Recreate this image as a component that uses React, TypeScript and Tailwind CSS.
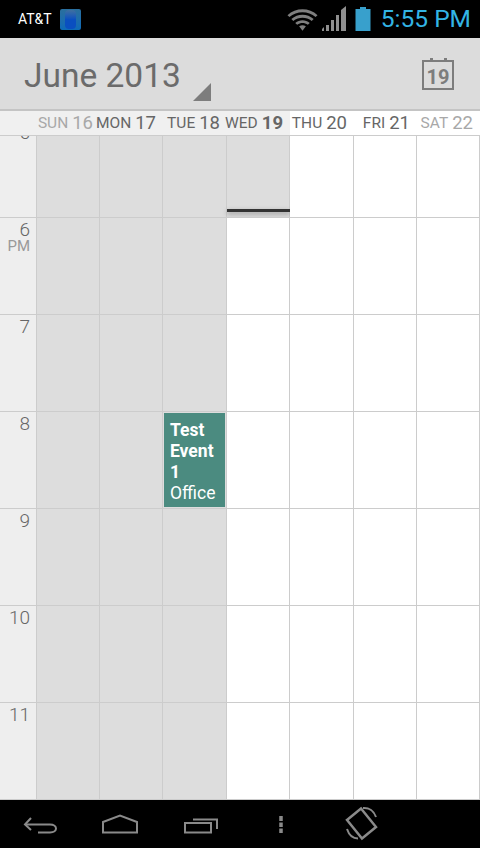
const days = [
  { name: 'SUN', num: '16', color: 'text-[#a8a8a8]', w: 'w-[63px]' },
  { name: 'MON', num: '17', color: 'text-[#666666]', w: 'w-[63px]' },
  { name: 'TUE', num: '18', color: 'text-[#666666]', w: 'w-[64px]' },
  { name: 'WED', num: '19', color: 'text-[#666666]', w: 'w-[63px]', today: true },
  { name: 'THU', num: '20', color: 'text-[#666666]', w: 'w-[64px]' },
  { name: 'FRI', num: '21', color: 'text-[#666666]', w: 'w-[63px]' },
  { name: 'SAT', num: '22', color: 'text-[#a8a8a8]', w: 'w-[63px]' },
];

const hours = ['6', '7', '8', '9', '10', '11'];

function StatusBar() {
  return (
    <div className="h-[38px] bg-black flex items-center pl-[18px] pr-[9px] shrink-0">
      <span className="text-[14px] text-white">AT&amp;T</span>
      <div className="ml-[8px] w-[21px] h-[21px] rounded-[2px] bg-gradient-to-b from-[#2a6f9e] to-[#0c6ab8] flex items-center justify-center">
        <div className="w-[11px] h-[19px] rounded-[4px] bg-gradient-to-b from-[#3f6f9f] via-[#0a4fc0] to-[#0a4fc0]" />
      </div>
      <svg className="ml-auto" width="31" height="24" viewBox="0 0 32 24" fill="#7f7f7f">
        <path d="M0.500 8C9 0 23 0 31.500 8L29.500 10C22 3.500 10 3.500 2.500 10Z" />
        <path d="M4.500 12C11 6 21 6 27.500 12L25.500 14C20 9.500 12 9.500 6.500 14Z" />
        <path d="M8.500 16C13 12.500 19 12.500 23.500 16L21.500 18C18 15.500 14 15.500 10.500 18Z" />
        <path d="M12.500 19.500C15 18 17 18 19.500 19.500L16 24Z" />
      </svg>
      <svg className="ml-[3px]" width="26" height="26" viewBox="0 0 26 26" fill="#8f8f8f">
        <path d="M1 25V23L3 21V25Z" />
        <path d="M5 25V19H8V25Z" />
        <path d="M10 25V14H13V25Z" />
        <path d="M15 25V9H18V25Z" />
        <path d="M20 25V4L25 0V25Z" />
      </svg>
      <svg className="ml-[8px]" width="16" height="24" viewBox="0 0 16 24" fill="#38a0cc">
        <path d="M5 0H11V2H15.500V24H0.500V2H5Z" />
      </svg>
      <span className="ml-[10px] text-[24.500px] leading-none text-[#33b5e5]">5:55 PM</span>
    </div>
  );
}

function ActionBar() {
  return (
    <div className="h-[71px] bg-[#dcdcdc] flex items-start relative shrink-0">
      <span className="ml-[24px] mt-[18px] text-[33.500px] leading-[40px] text-[#6b6b6b]">June 2013</span>
      <svg className="absolute left-[193px] top-[45px]" width="18" height="18" viewBox="0 0 18 18" fill="#7d7d7d">
        <path d="M18 0V18H0Z" />
      </svg>
      <div className="absolute left-[422px] top-[22px] w-[32px] h-[30px] border-2 border-[#7d7d7d] flex items-center justify-center">
        <span className="text-[20px] leading-none font-bold text-[#7d7d7d] mt-[3px]">19</span>
      </div>
      <div className="absolute left-[430px] top-[20px] w-[3px] h-[4px] bg-[#7d7d7d]" />
      <div className="absolute left-[444px] top-[20px] w-[3px] h-[4px] bg-[#7d7d7d]" />
    </div>
  );
}

function DayHeader() {
  return (
    <div className="h-[27px] flex shrink-0 border-t-2 border-[#c4c4c4] border-b border-b-[#cccccc]">
      <div className="w-[37px] bg-[#f0f0f0]" />
      {days.map((d, i) => (
        <div
          key={d.name}
          className={`${d.w} flex items-center justify-end gap-[4px] pr-[7px] pt-[1px] whitespace-nowrap ${d.color} ${i < 4 ? 'bg-[#f0f0f0]' : 'bg-white'}`}
        >
          <span className="text-[15.500px] leading-none">{d.name}</span>
          <span className={`text-[18.500px] leading-none ${d.today ? 'font-bold' : ''}`}>{d.num}</span>
        </div>
      ))}
    </div>
  );
}

function DayCell({ index, shaded, children }: { index: number; shaded: boolean; children?: React.ReactNode }) {
  return (
    <div className={`${days[index].w} relative border-r border-[#cccccc] ${shaded ? 'bg-[#dddddd]' : 'bg-white'}`}>
      {children}
    </div>
  );
}

function HourRow({ hour }: { hour: string }) {
  return (
    <div className="h-[97px] flex border-b border-[#cccccc]">
      <div className="w-[37px] bg-[#eeeeee] border-r border-[#cccccc] relative text-right pr-[6px] pt-[2px]">
        <div className="text-[19px] leading-[20px] font-light text-[#666666]">{hour}</div>
        {hour === '6' && <div className="text-[15px] leading-[14px] -mt-[1px] text-[#999999]">PM</div>}
      </div>
      {days.map((d, i) => (
        <DayCell key={d.name} index={i} shaded={i < 3}>
          {hour === '8' && i === 2 && (
            <div className="absolute left-[1px] top-[1px] w-[61px] h-[94px] bg-[#4b8b80] text-white px-[6px] pt-[7px] text-[17.500px] leading-[21px]">
              <div className="font-bold">Test Event 1</div>
              <div>Office</div>
            </div>
          )}
        </DayCell>
      ))}
    </div>
  );
}

function FirstRow() {
  return (
    <div className="h-[82px] flex border-b border-[#cccccc] overflow-hidden">
      <div className="w-[37px] bg-[#eeeeee] border-r border-[#cccccc] text-right pr-[6px] overflow-hidden">
        <div className="text-[19px] leading-[22px] font-light text-[#666666] -mt-[14px]">5</div>
      </div>
      {days.map((d, i) => (
        <DayCell key={d.name} index={i} shaded={i < 4}>
          {i === 3 && (
            <div className="absolute left-0 right-[-1px] top-[73px] h-[3px] bg-[#333333] shadow-[0_2px_5px_rgba(0,0,0,0.35)]" />
          )}
        </DayCell>
      ))}
    </div>
  );
}

function NavBar() {
  return (
    <div className="h-[48px] bg-black flex items-center shrink-0 relative">
      <svg className="absolute left-0 top-0" width="400" height="48" viewBox="0 0 400 48" fill="none" stroke="#8a8a8a" strokeWidth="2">
        <path d="M31 18L25 24.500L31 30" />
        <path d="M25 24.500H50C58 24.500 58 32.500 50 32.500H38" />
        <path d="M103 32.500V22L120 15.500L137 22V32.500Z" />
        <path d="M185 32.500V23H211V32.500Z" />
        <path d="M193 19.500H217V29" />
        <path d="M281 16V21M281 22.500V27M281 28.500V33" strokeWidth="3.500" />
        <path d="M347 20L361 8.500L376 27L362 38.500Z" strokeWidth="2.500" />
        <path d="M363 8C369 7.500 374 11 376 17" />
        <path d="M347 29C349 35 353 38.500 358 38.500" />
      </svg>
    </div>
  );
}

export default function App() {
  return (
    <div className="w-[480px] h-[848px] flex flex-col overflow-hidden font-['Roboto',sans-serif]">
      <StatusBar />
      <ActionBar />
      <DayHeader />
      <div className="flex-1 overflow-hidden">
        <FirstRow />
        {hours.map((h) => (
          <HourRow key={h} hour={h} />
        ))}
      </div>
      <NavBar />
    </div>
  );
}
